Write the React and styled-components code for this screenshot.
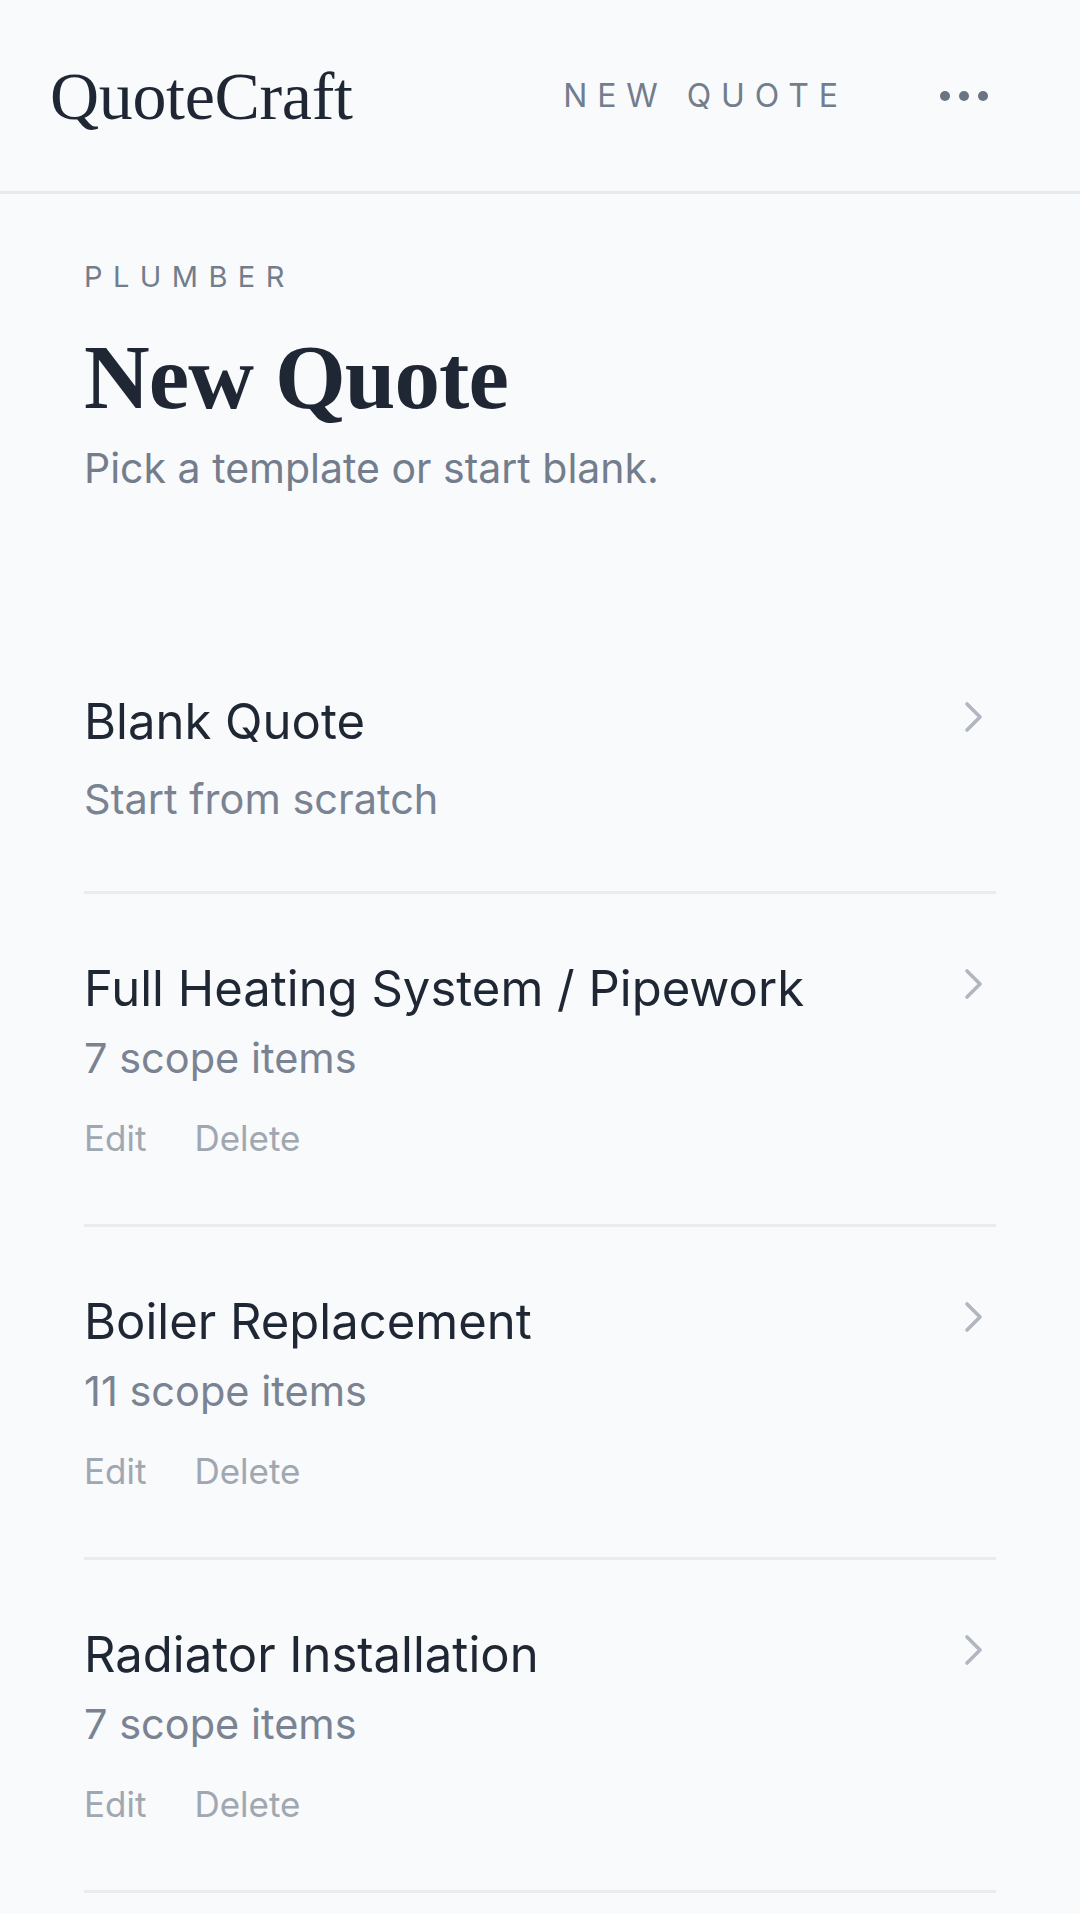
import styled, { createGlobalStyle } from "styled-components";

const GlobalStyle = createGlobalStyle`
  html, body {
    margin: 0;
    padding: 0;
    background: #f8fafc;
  }
  body {
    font-family: Inter, "Noto Sans", sans-serif;
    color: #1e2733;
  }
  * {
    box-sizing: border-box;
  }
`;

const Page = styled.div`
  min-height: 1914px;
  background: #f8fafc;
`;

const Header = styled.header`
  height: 194px;
  display: flex;
  align-items: center;
  justify-content: space-between;
  padding: 0 92px 0 50px;
  border-bottom: 3px solid #e6e9ed;
`;

const Logo = styled.div`
  font-family: "Liberation Serif", "DejaVu Serif", serif;
  font-size: 68px;
  line-height: 1;
  color: #1e2733;
  letter-spacing: -0.005em;
`;

const HeaderRight = styled.div`
  display: flex;
  align-items: center;
  gap: 92px;
`;

const NavLabel = styled.span`
  font-size: 32px;
  letter-spacing: 0.31em;
  color: #737d8c;
  text-transform: uppercase;
  line-height: 1;
`;

const Dots = styled.div`
  display: flex;
  gap: 9px;
  span {
    width: 10px;
    height: 10px;
    border-radius: 50%;
    background: #6b7482;
  }
`;

const Main = styled.main`
  padding: 63px 84px 0;
`;

const Hero = styled.section`
  margin-bottom: 130px;
`;

const Eyebrow = styled.div`
  font-size: 29px;
  line-height: 40px;
  letter-spacing: 0.36em;
  color: #737d8c;
  text-transform: uppercase;
`;

const Heading = styled.h1`
  margin: 31px 0 0;
  font-family: "Liberation Serif", "DejaVu Serif", serif;
  font-weight: 700;
  font-size: 91px;
  line-height: 99px;
  letter-spacing: -0.01em;
  color: #1e2733;
`;

const Lead = styled.p`
  margin: 12px 0 0;
  font-size: 41px;
  line-height: 58px;
  color: #737d8c;
`;

const List = styled.div`
  display: flex;
  flex-direction: column;
`;

const Item = styled.div`
  display: flex;
  justify-content: space-between;
  align-items: flex-start;
  padding: 62px 0;
  border-bottom: 3px solid #eaedf0;
`;

const ItemBody = styled.div`
  display: flex;
  flex-direction: column;
`;

const ItemTitle = styled.div`
  font-size: 49px;
  line-height: 65px;
  color: #1e2733;
`;

const ItemMeta = styled.div`
  margin-top: ${({ $loose }) => ($loose ? "16px" : "8px")};
  font-size: 41.5px;
  line-height: 59px;
  color: #7a8392;
`;

const Actions = styled.div`
  display: flex;
  gap: 48px;
  margin-top: 26px;
`;

const ActionLink = styled.span`
  font-size: 35px;
  line-height: 48px;
  color: #a0a7b1;
`;

const Chevron = styled.svg`
  flex: none;
  margin: 12px 12px 0 0;
`;

const templates = [
  { id: 1, title: "Full Heating System / Pipework", items: 7 },
  { id: 2, title: "Boiler Replacement", items: 11 },
  { id: 3, title: "Radiator Installation", items: 7 },
];

function ChevronIcon() {
  return (
    <Chevron width="20" height="32" viewBox="0 0 20 32" fill="none">
      <path
        d="M3 3 L16 16 L3 29"
        stroke="#b1b7c0"
        strokeWidth="3.6"
        strokeLinecap="round"
        strokeLinejoin="round"
      />
    </Chevron>
  );
}

export default function App() {
  return (
    <Page>
      <GlobalStyle />
      <Header>
        <Logo>QuoteCraft</Logo>
        <HeaderRight>
          <NavLabel>New Quote</NavLabel>
          <Dots>
            <span />
            <span />
            <span />
          </Dots>
        </HeaderRight>
      </Header>
      <Main>
        <Hero>
          <Eyebrow>Plumber</Eyebrow>
          <Heading>New Quote</Heading>
          <Lead>Pick a template or start blank.</Lead>
        </Hero>
        <List>
          <Item>
            <ItemBody>
              <ItemTitle>Blank Quote</ItemTitle>
              <ItemMeta $loose>Start from scratch</ItemMeta>
            </ItemBody>
            <ChevronIcon />
          </Item>
          {templates.map(({ id, title, items }) => (
            <Item key={id}>
              <ItemBody>
                <ItemTitle>{title}</ItemTitle>
                <ItemMeta>{items} scope items</ItemMeta>
                <Actions>
                  <ActionLink>Edit</ActionLink>
                  <ActionLink>Delete</ActionLink>
                </Actions>
              </ItemBody>
              <ChevronIcon />
            </Item>
          ))}
        </List>
      </Main>
    </Page>
  );
}
